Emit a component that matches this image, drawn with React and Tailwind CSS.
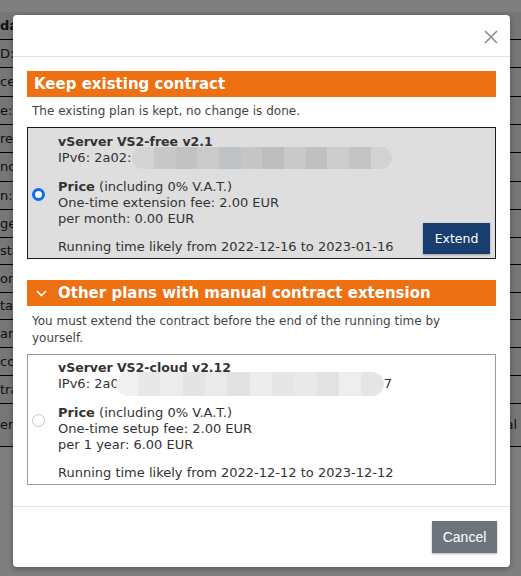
import React from 'react';

const rows = [
  { h: 28, t: 'da', bold: true },
  { h: 28, t: 'D:' },
  { h: 29, t: 'ce' },
  { h: 28, t: 'e:' },
  { h: 28, t: 're' },
  { h: 29, t: 'nc' },
  { h: 28, t: 'n:' },
  { h: 28, t: 'ge' },
  { h: 27, t: 'sta' },
  { h: 28, t: 'on:' },
  { h: 27, t: 'tar' },
  { h: 28, t: 'arr' },
  { h: 28, t: 'con' },
  { h: 28, t: 'tra' },
  { h: 43, t: 'ern', r: 'al' },
];

// pixelated "blurred" patch hiding the address
const Blob = ({ w, h, shades }) => (
  <span
    className="inline-flex align-middle overflow-hidden rounded-full blur-[0.6px]"
    style={{ width: w, height: h }}
  >
    {shades.map((c, i) => (
      <span key={i} className="h-full flex-1" style={{ background: c }} />
    ))}
  </span>
);

const Radio = ({ checked }) =>
  checked ? (
    <span className="block w-[13px] h-[13px] rounded-full border-[3.5px] border-[#0b6bf5] bg-white" />
  ) : (
    <span className="block w-[13px] h-[13px] rounded-full border border-[#c4c4c4] bg-white" />
  );

const PlanCard = ({ title, ipv6, price, gray, checked, showExtend }) => (
  <div
    className={
      'border text-[13px] ' +
      (gray ? 'bg-[#dedede] border-[#1a1a1a] pt-[6px]' : 'bg-white border-[#9a9a9a] pt-[5px]') +
      ' pb-[3px] pr-[5px]'
    }
  >
    <div className="pl-[30px]">
      <div className="font-bold text-[12.5px]">{title}</div>
      <div className="flex items-center h-[16px]">{ipv6}</div>
    </div>
    <div className="flex mt-[13px]">
      <div className="w-[30px] pl-[4px] pt-[9px]">
        <Radio checked={checked} />
      </div>
      <div>
        <div>
          <span className="font-bold">Price</span> (including 0% V.A.T.)
        </div>
        {price.map((p) => (
          <div key={p}>{p}</div>
        ))}
      </div>
    </div>
    <div className={'flex items-end justify-between pl-[30px] ' + (showExtend ? 'mt-[-4px]' : 'mt-[12px]')}>
      <div>{showExtend ? 'Running time likely from 2022-12-16 to 2023-01-16' : 'Running time likely from 2022-12-12 to 2023-12-12'}</div>
      {showExtend && (
        <button className="mb-[1px] w-[67px] h-[31px] bg-[#183e6f] text-white text-[12.5px] shadow-[0_1px_2px_rgba(0,0,0,0.3)]">
          Extend
        </button>
      )}
    </div>
  </div>
);

export default function App() {
  return (
    <div className="relative w-[521px] h-[576px] overflow-hidden bg-white font-['DejaVu_Sans',sans-serif] text-[12px] leading-[16px] text-[#333]">
      {/* page underneath */}
      <div className="pt-[12px]">
        {rows.map((r, i) => (
          <div
            key={i}
            className="flex justify-between items-center border-b border-black bg-[#eeeeee]"
            style={{ height: r.h }}
          >
            <span className={'text-[13px] text-[#222] ' + (r.bold ? 'font-bold' : '')}>{r.t}</span>
            <span className="text-[13px] text-[#3a1a4a] pr-[4px]">{r.r}</span>
          </div>
        ))}
      </div>

      {/* dim overlay + modal */}
      <div className="absolute inset-0 bg-black/50">
        <div className="mt-[15px] ml-[13px] w-[497px] h-[552px] bg-white rounded-[4px] flex flex-col shadow-[0_2px_6px_rgba(0,0,0,0.3)]">
          <div className="h-[42px] shrink-0 flex items-start justify-end pt-[15px] pr-[12px] border-b border-[#e3e3e3]">
            <svg width="14" height="14" viewBox="0 0 14 14" stroke="#8a8a8a" strokeWidth="1.6" fill="none">
              <path d="M1 1 L13 13 M13 1 L1 13" />
            </svg>
          </div>

          <div className="px-[14px] pt-[14px] pb-[21px] border-b border-[#e3e3e3]">
            <div className="h-[26px] bg-[#ed7012] flex items-center pl-[7px] text-white font-bold text-[15px]">
              Keep existing contract
            </div>
            <p className="mt-[6px] pl-[5px] text-[#444]">The existing plan is kept, no change is done.</p>
            <div className="mt-[8px]">
              <PlanCard
                gray
                checked
                showExtend
                title="vServer VS2-free v2.1"
                ipv6={
                  <>
                    <span>IPv6: 2a02:</span>
                    <span className="ml-[1px] -my-[4px]">
                      <Blob
                        w={260}
                        h={22}
                        shades={['#d4d4d4', '#c8c8c8', '#c2c2c2', '#cbcbcb', '#bfc2c4', '#c6c6c6', '#bdbdbd', '#c9c9c9', '#c0c0c0', '#cccccc', '#c4c4c4', '#d2d2d2']}
                      />
                    </span>
                  </>
                }
                price={['One-time extension fee: 2.00 EUR', 'per month: 0.00 EUR']}
              />
            </div>

            <div className="mt-[21px] h-[26px] bg-[#ed7012] flex items-center pl-[9px] text-white font-bold text-[15px]">
              <svg width="11" height="7" viewBox="0 0 11 7" stroke="white" strokeWidth="1.6" fill="none" className="mr-[11px]">
                <path d="M1 1 L5.5 5.5 L10 1" />
              </svg>
              Other plans with manual contract extension
            </div>
            <p className="mt-[7px] pl-[5px] pr-[10px] leading-[17px] text-[#444]">
              You must extend the contract before the end of the running time by yourself.
            </p>
            <div className="mt-[7px]">
              <PlanCard
                title="vServer VS2-cloud v2.12"
                ipv6={
                  <>
                    <span>IPv6: 2a0</span>
                    <span className="-ml-[3px] -my-[4px]">
                      <Blob
                        w={268}
                        h={24}
                        shades={['#f0f0f0', '#e8e8e8', '#ececec', '#e4e4e4', '#eaeaea', '#e2e2e2', '#ededed', '#e6e6e6', '#e9e9e9', '#e3e3e3', '#eeeeee', '#e5e5e5']}
                      />
                    </span>
                    <span>7</span>
                  </>
                }
                price={['One-time setup fee: 2.00 EUR', 'per 1 year: 6.00 EUR']}
              />
            </div>
          </div>

          <div className="flex-1 flex justify-end items-start pt-[14px] pr-[13px]">
            <button className="w-[65px] h-[32px] bg-[#6c757d] text-white text-[14px] font-['Liberation_Sans',sans-serif] shadow-[0_1px_2px_rgba(0,0,0,0.3)]">
              Cancel
            </button>
          </div>
        </div>
      </div>
    </div>
  );
}
